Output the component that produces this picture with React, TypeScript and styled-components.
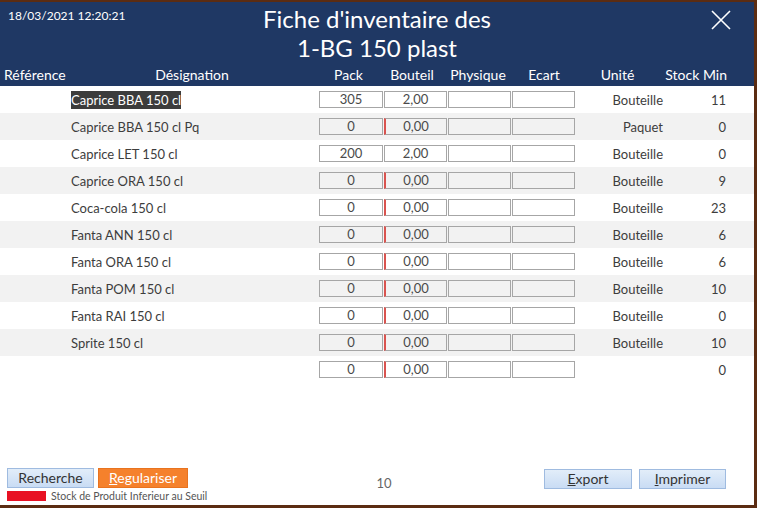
import React from "react";
import styled, { createGlobalStyle } from "styled-components";

const GlobalStyle = createGlobalStyle`
  html, body {
    margin: 0;
    padding: 0;
    background: #5b2c12;
  }
  body {
    font-family: Lato, "Liberation Sans", sans-serif;
  }
`;

type Item = {
  designation: string;
  pack: string;
  bouteil: string;
  unite: string;
  stockMin: string;
  selected?: boolean;
};

const items: Item[] = [
  { designation: "Caprice BBA 150 cl", pack: "305", bouteil: "2,00", unite: "Bouteille", stockMin: "11", selected: true },
  { designation: "Caprice BBA 150 cl Pq", pack: "0", bouteil: "0,00", unite: "Paquet", stockMin: "0" },
  { designation: "Caprice LET 150 cl", pack: "200", bouteil: "2,00", unite: "Bouteille", stockMin: "0" },
  { designation: "Caprice ORA 150 cl", pack: "0", bouteil: "0,00", unite: "Bouteille", stockMin: "9" },
  { designation: "Coca-cola 150 cl", pack: "0", bouteil: "0,00", unite: "Bouteille", stockMin: "23" },
  { designation: "Fanta ANN 150 cl", pack: "0", bouteil: "0,00", unite: "Bouteille", stockMin: "6" },
  { designation: "Fanta ORA 150 cl", pack: "0", bouteil: "0,00", unite: "Bouteille", stockMin: "6" },
  { designation: "Fanta POM 150 cl", pack: "0", bouteil: "0,00", unite: "Bouteille", stockMin: "10" },
  { designation: "Fanta RAI 150 cl", pack: "0", bouteil: "0,00", unite: "Bouteille", stockMin: "0" },
  { designation: "Sprite 150 cl", pack: "0", bouteil: "0,00", unite: "Bouteille", stockMin: "10" },
  { designation: "", pack: "0", bouteil: "0,00", unite: "", stockMin: "0" },
];

const columns = "65px 254px 65px 64px 64px 64px 89px 1fr";

const Window = styled.div`
  height: 508px;
  width: 757px;
  box-sizing: border-box;
  padding: 2px 3px 3px 0;
  display: flex;
`;

const Panel = styled.div`
  flex: 1;
  background: #ffffff;
  display: flex;
  flex-direction: column;
`;

const Header = styled.header`
  background: #1f3864;
  color: #ffffff;
`;

const TopBar = styled.div`
  display: grid;
  grid-template-columns: 1fr auto 1fr;
  padding-top: 2px;
`;

const DateStamp = styled.div`
  font-size: 12px;
  padding: 4px 0 0 8px;
`;

const Title = styled.h1`
  margin: 0;
  font-weight: 400;
  font-size: 24px;
  line-height: 29px;
  text-align: center;
`;

const CloseButton = styled.button`
  justify-self: end;
  margin: 4px 21px 0 0;
  width: 24px;
  height: 24px;
  padding: 0;
  border: none;
  background: none;
  cursor: pointer;
`;

const HeaderRow = styled.div`
  display: grid;
  grid-template-columns: ${columns};
  height: 24px;
  align-items: center;
  font-size: 14px;
`;

const HeadCell = styled.div<{ $align?: "left" | "center" | "right"; $pad?: string }>`
  text-align: ${(p) => p.$align ?? "center"};
  padding: ${(p) => p.$pad ?? "0"};
  white-space: nowrap;
`;

const Rows = styled.div`
  display: flex;
  flex-direction: column;
`;

const Row = styled.div<{ $shaded: boolean }>`
  display: grid;
  grid-template-columns: ${columns};
  height: 27px;
  align-items: center;
  background: ${(p) => (p.$shaded ? "#f2f2f2" : "#ffffff")};
  font-size: 13px;
  color: #3d3d3d;
`;

const Designation = styled.div`
  padding-left: 6px;
  white-space: nowrap;
`;

const Selected = styled.span`
  background: #3c3c3c;
  color: #ffffff;
  padding: 1px 0;
`;

const Field = styled.div<{ $shaded: boolean; $alert?: boolean }>`
  height: 17px;
  margin-right: 1px;
  box-sizing: border-box;
  border: 1px solid #a6a6a6;
  border-left-color: ${(p) => (p.$alert ? "#d9534f" : "#a6a6a6")};
  border-left-width: ${(p) => (p.$alert ? "2px" : "1px")};
  background: ${(p) => (p.$shaded ? "#f2f2f2" : "#ffffff")};
  text-align: center;
  font-size: 13px;
  line-height: 15px;
  color: #4a4a4a;
`;

const Unit = styled.div`
  text-align: right;
  padding-right: 2px;
`;

const StockMin = styled.div`
  text-align: right;
  padding-right: 28px;
`;

const Spacer = styled.div`
  flex: 1;
`;

const Footer = styled.footer`
  display: grid;
  grid-template-columns: 1fr auto 1fr;
  align-items: end;
  padding: 0 28px 3px 7px;
`;

const LeftGroup = styled.div`
  display: flex;
  flex-direction: column;
  gap: 2px;
`;

const ButtonRow = styled.div`
  display: flex;
  gap: 4px;
`;

const RightGroup = styled.div`
  display: flex;
  justify-content: flex-end;
  gap: 7px;
  padding-bottom: 13px;
`;

const Button = styled.button<{ $variant?: "blue" | "orange"; $w: number }>`
  width: ${(p) => p.$w}px;
  height: 20px;
  padding: 0;
  font-family: Lato, "Liberation Sans", sans-serif;
  font-size: 14px;
  line-height: 18px;
  cursor: pointer;
  border: 1px solid ${(p) => (p.$variant === "orange" ? "#e8731f" : "#9fbbe0")};
  background: ${(p) =>
    p.$variant === "orange"
      ? "#f5812c"
      : "linear-gradient(#e2edf9, #c9dcf4)"};
  color: ${(p) => (p.$variant === "orange" ? "#ffffff" : "#333333")};
  u {
    text-decoration: underline;
  }
`;

const Legend = styled.div`
  display: flex;
  align-items: center;
  gap: 5px;
  font-size: 10.5px;
  color: #555555;
  height: 12px;
`;

const Swatch = styled.span`
  width: 39px;
  height: 10px;
  background: #e81123;
`;

const Count = styled.div`
  font-size: 13px;
  color: #666666;
  padding: 0 0 11px 35px;
`;

export default function App() {
  return (
    <>
      <GlobalStyle />
      <Window>
        <Panel>
          <Header>
            <TopBar>
              <DateStamp>18/03/2021 12:20:21</DateStamp>
              <Title>
                Fiche d'inventaire des
                <br />
                1-BG 150 plast
              </Title>
              <CloseButton aria-label="Fermer">
                <svg width="24" height="24" viewBox="0 0 24 24">
                  <path d="M3 3 L21 21 M21 3 L3 21" stroke="#ffffff" strokeWidth="1.6" fill="none" />
                </svg>
              </CloseButton>
            </TopBar>
            <HeaderRow>
              <HeadCell $align="left" $pad="0 0 0 4px">Référence</HeadCell>
              <HeadCell>Désignation</HeadCell>
              <HeadCell $pad="0 6px 0 0">Pack</HeadCell>
              <HeadCell $pad="0 8px 0 0">Bouteil</HeadCell>
              <HeadCell $pad="0 4px 0 0">Physique</HeadCell>
              <HeadCell>Ecart</HeadCell>
              <HeadCell $pad="0 6px 0 0">Unité</HeadCell>
              <HeadCell $align="right" $pad="0 27px 0 0">Stock Min</HeadCell>
            </HeaderRow>
          </Header>
          <Rows>
            {items.map((it, i) => {
              const shaded = i % 2 === 1 && i < 10;
              const alert = it.bouteil === "0,00";
              return (
                <Row key={i} $shaded={shaded}>
                  <div />
                  <Designation>
                    {it.selected ? <Selected>{it.designation}</Selected> : it.designation}
                  </Designation>
                  <Field $shaded={shaded}>{it.pack}</Field>
                  <Field $shaded={shaded} $alert={alert}>{it.bouteil}</Field>
                  <Field $shaded={shaded} />
                  <Field $shaded={shaded} />
                  <Unit>{it.unite}</Unit>
                  <StockMin>{it.stockMin}</StockMin>
                </Row>
              );
            })}
          </Rows>
          <Spacer />
          <Footer>
            <LeftGroup>
              <ButtonRow>
                <Button $w={87}>Recherche</Button>
                <Button $w={90} $variant="orange">
                  <u>R</u>egulariser
                </Button>
              </ButtonRow>
              <Legend>
                <Swatch />
                Stock de Produit Inferieur au Seuil
              </Legend>
            </LeftGroup>
            <Count>10</Count>
            <RightGroup>
              <Button $w={88}>
                <u>E</u>xport
              </Button>
              <Button $w={87}>
                <u>I</u>mprimer
              </Button>
            </RightGroup>
          </Footer>
        </Panel>
      </Window>
    </>
  );
}
